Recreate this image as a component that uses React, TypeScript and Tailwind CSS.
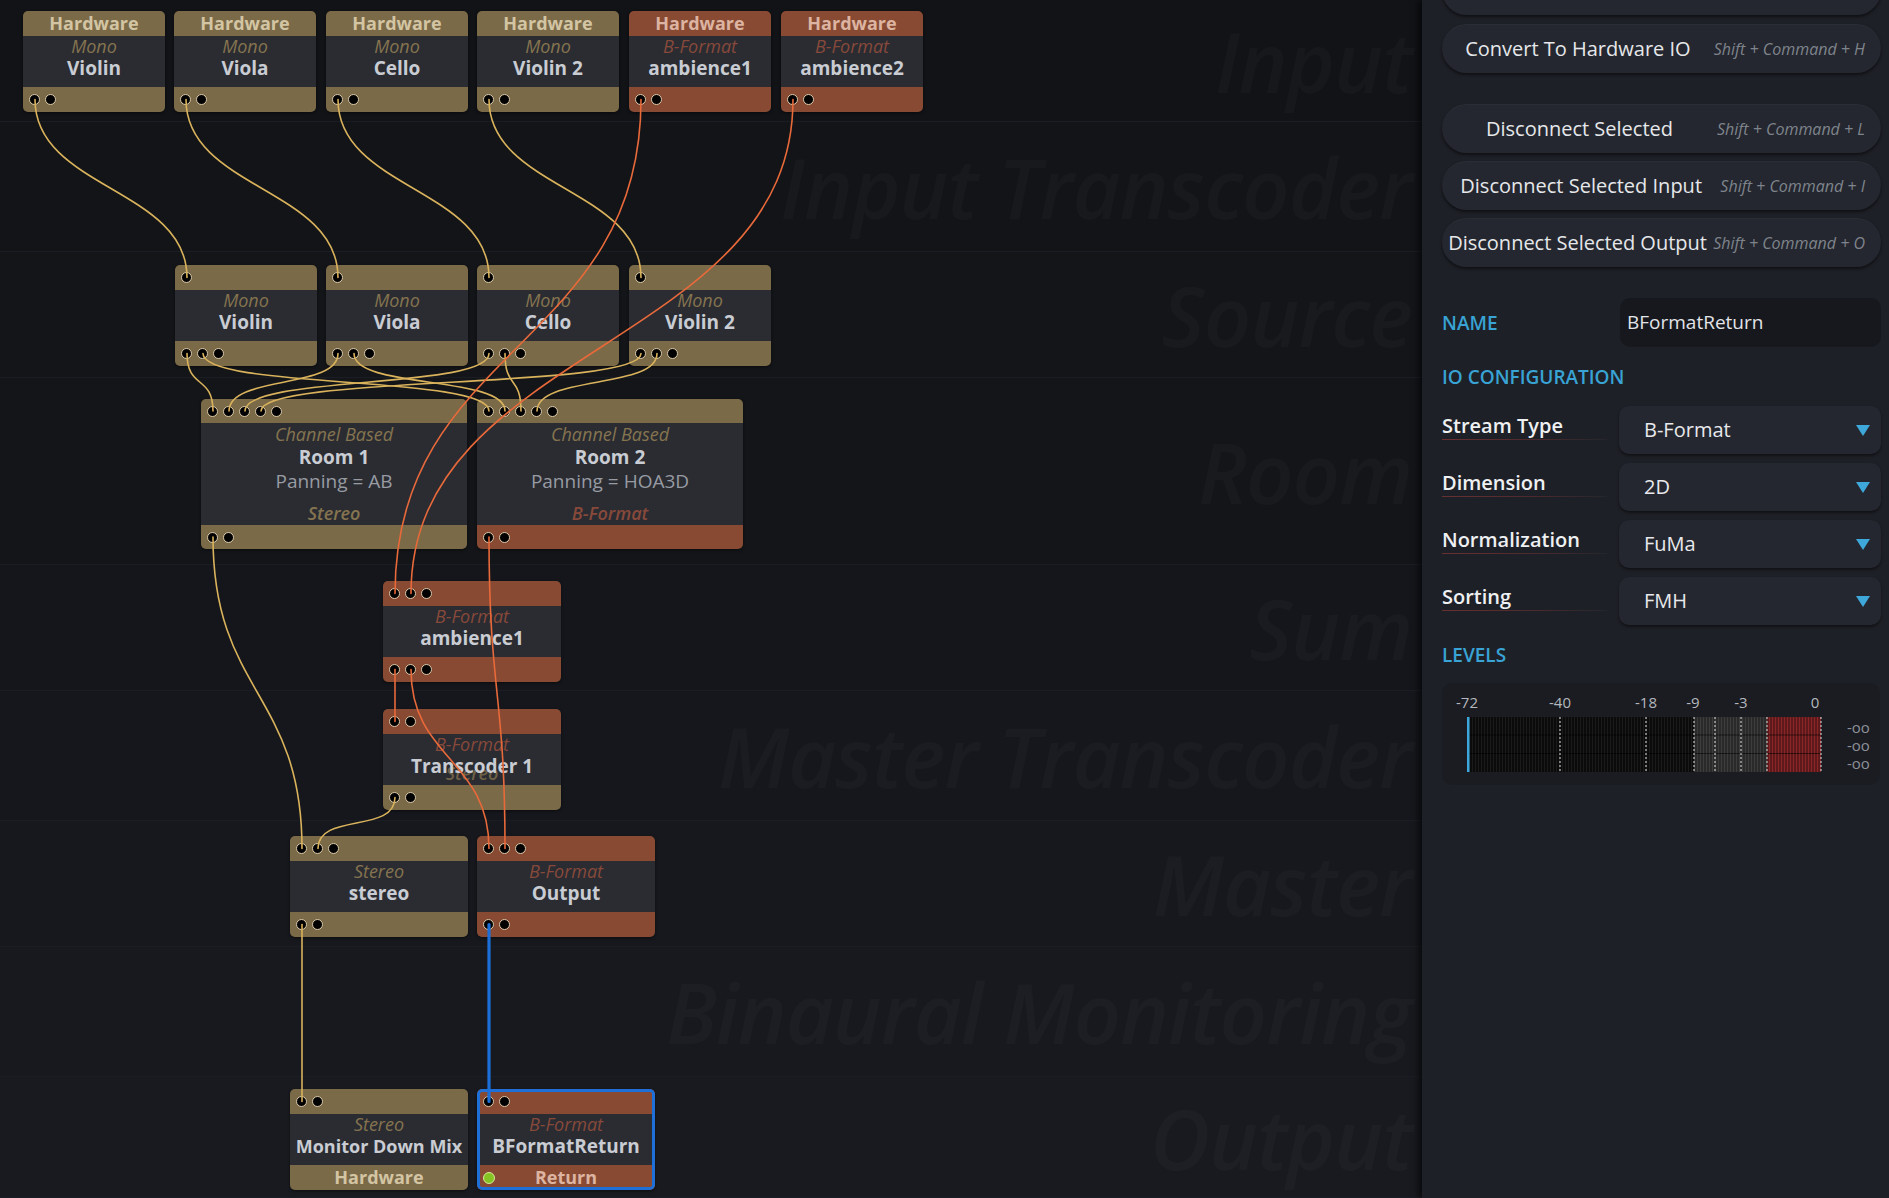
import React from 'react';

type Tone = 'tan' | 'orange';
type Pt = { x: number; y: number };

const barBg: Record<Tone, string> = { tan: 'bg-[#7b6a48]', orange: 'bg-[#884a33]' };
const barText: Record<Tone, string> = { tan: 'text-[#d3c5a3]', orange: 'text-[#dcb4a1]' };
const kindText: Record<Tone, string> = { tan: 'text-[#85744f]', orange: 'text-[#87493a]' };

type NodeDef = {
    id: string;
    x: number;
    y: number;
    w: number;
    top: Tone;
    bottom: Tone;
    ins: number;
    outs: number;
    head?: string;
    foot?: string;
    kind: string;
    kindTone: Tone;
    name: string;
    nameCls?: string;
    room?: { panning: string; format: string; formatTone: Tone };
    ghost?: string;
    selected?: boolean;
    dot?: boolean;
};

const BANDS = [
    { name: 'Input', cls: 'h-[122px] bg-[#111317]' },
    { name: 'Input Transcoder', cls: 'h-[130px] bg-[#121418]' },
    { name: 'Source', cls: 'h-[126px] bg-[#131519]' },
    { name: 'Room', cls: 'h-[187px] bg-[#131519]' },
    { name: 'Sum', cls: 'h-[126px] bg-[#14161b]' },
    { name: 'Master Transcoder', cls: 'h-[130px] bg-[#15171c]' },
    { name: 'Master', cls: 'h-[126px] bg-[#16181d]' },
    { name: 'Binaural Monitoring', cls: 'h-[130px] bg-[#17191e]' },
    { name: 'Output', cls: 'h-[121px] bg-[#181a1f]' },
];

const input = (id: string, x: number, name: string, tone: Tone): NodeDef => ({
    id, x, y: 11, w: 142, top: tone, bottom: tone, ins: 0, outs: 2, head: 'Hardware',
    kind: tone === 'tan' ? 'Mono' : 'B-Format', kindTone: tone, name,
});

const source = (id: string, x: number, name: string): NodeDef => ({
    id, x, y: 265, w: 142, top: 'tan', bottom: 'tan', ins: 1, outs: 3, kind: 'Mono', kindTone: 'tan', name,
});

const NODES: NodeDef[] = [
    input('in-violin', 23, 'Violin', 'tan'),
    input('in-viola', 174, 'Viola', 'tan'),
    input('in-cello', 326, 'Cello', 'tan'),
    input('in-violin2', 477, 'Violin 2', 'tan'),
    input('in-amb1', 629, 'ambience1', 'orange'),
    input('in-amb2', 781, 'ambience2', 'orange'),
    source('src-violin', 175, 'Violin'),
    source('src-viola', 326, 'Viola'),
    source('src-cello', 477, 'Cello'),
    source('src-violin2', 629, 'Violin 2'),
    {
        id: 'room1', x: 201, y: 399, w: 266, top: 'tan', bottom: 'tan', ins: 5, outs: 2,
        kind: 'Channel Based', kindTone: 'tan', name: 'Room 1',
        room: { panning: 'Panning = AB', format: 'Stereo', formatTone: 'tan' },
    },
    {
        id: 'room2', x: 477, y: 399, w: 266, top: 'tan', bottom: 'orange', ins: 5, outs: 2,
        kind: 'Channel Based', kindTone: 'tan', name: 'Room 2',
        room: { panning: 'Panning = HOA3D', format: 'B-Format', formatTone: 'orange' },
    },
    { id: 'sum', x: 383, y: 581, w: 178, top: 'orange', bottom: 'orange', ins: 3, outs: 3, kind: 'B-Format', kindTone: 'orange', name: 'ambience1' },
    { id: 'tc1', x: 383, y: 709, w: 178, top: 'orange', bottom: 'tan', ins: 2, outs: 2, kind: 'B-Format', kindTone: 'orange', name: 'Transcoder 1', ghost: 'Stereo' },
    { id: 'stereo', x: 290, y: 836, w: 178, top: 'tan', bottom: 'tan', ins: 3, outs: 2, kind: 'Stereo', kindTone: 'tan', name: 'stereo' },
    { id: 'output', x: 477, y: 836, w: 178, top: 'orange', bottom: 'orange', ins: 3, outs: 2, kind: 'B-Format', kindTone: 'orange', name: 'Output' },
    { id: 'mon', x: 290, y: 1089, w: 178, top: 'tan', bottom: 'tan', ins: 2, outs: 0, kind: 'Stereo', kindTone: 'tan', name: 'Monitor Down Mix', nameCls: 'text-[18px]', foot: 'Hardware' },
    { id: 'ret', x: 477, y: 1089, w: 178, top: 'orange', bottom: 'orange', ins: 2, outs: 0, kind: 'B-Format', kindTone: 'orange', name: 'BFormatReturn', foot: 'Return', dot: true, selected: true },
];

const WIRE_COLOR = { tan: '#d9b25c', orange: '#e8693a', blue: '#1c6fd8' };

const WIRES: [string, number, string, number, keyof typeof WIRE_COLOR][] = [
    ['in-violin', 0, 'src-violin', 0, 'tan'],
    ['in-viola', 0, 'src-viola', 0, 'tan'],
    ['in-cello', 0, 'src-cello', 0, 'tan'],
    ['in-violin2', 0, 'src-violin2', 0, 'tan'],
    ['src-violin', 0, 'room1', 0, 'tan'],
    ['src-viola', 0, 'room1', 1, 'tan'],
    ['src-cello', 0, 'room1', 2, 'tan'],
    ['src-violin2', 0, 'room1', 3, 'tan'],
    ['src-violin', 1, 'room2', 0, 'tan'],
    ['src-viola', 1, 'room2', 1, 'tan'],
    ['src-cello', 1, 'room2', 2, 'tan'],
    ['src-violin2', 1, 'room2', 3, 'tan'],
    ['room1', 0, 'stereo', 0, 'tan'],
    ['tc1', 0, 'stereo', 1, 'tan'],
    ['stereo', 0, 'mon', 0, 'tan'],
    ['in-amb1', 0, 'sum', 0, 'orange'],
    ['in-amb2', 0, 'sum', 1, 'orange'],
    ['sum', 0, 'tc1', 0, 'orange'],
    ['sum', 1, 'output', 0, 'orange'],
    ['room2', 0, 'output', 1, 'orange'],
    ['output', 0, 'ret', 0, 'blue'],
];

const nodeHeight = (n: NodeDef) => (n.room ? 150 : 101);
const barHeight = (n: NodeDef) => (n.room ? 24 : 25);

function portPos(id: string, side: 'in' | 'out', i: number): Pt {
    const n = NODES.find(d => d.id === id)!;
    const half = barHeight(n) / 2;
    return {
        x: n.x + 12 + i * 16,
        y: side === 'in' ? n.y + half : n.y + nodeHeight(n) - half,
    };
}

function wirePath(a: Pt, b: Pt) {
    const d = Math.max(36, (b.y - a.y) * 0.5);
    return `M${a.x} ${a.y} C${a.x} ${a.y + d} ${b.x} ${b.y - d} ${b.x} ${b.y}`;
}

const Ports: React.FC<{ n: number }> = ({ n }) => (
    <div className="flex gap-[5px] pl-[6px]">
        {Array.from({ length: n }).map((_, i) => (
            <span key={i} className="block h-[11px] w-[11px] rounded-full border-[1.5px] border-[#dccbac] bg-black" />
        ))}
    </div>
);

const GraphNode: React.FC<{ d: NodeDef }> = ({ d }) => {
    const bar = d.room ? 'h-[24px]' : 'h-[25px]';
    return (
        <div
            className="absolute flex flex-col overflow-hidden rounded-[5px] shadow-[0_1px_3px_rgba(0,0,0,0.5)]"
            style={{ left: d.x, top: d.y, width: d.w }}
        >
            {/* header: title or input ports */}
            {d.head ? (
                <div className={`flex ${bar} items-center justify-center ${barBg[d.top]} text-[18px] font-bold ${barText[d.top]}`}>
                    {d.head}
                </div>
            ) : (
                <div className={`flex ${bar} items-center ${barBg[d.top]}`}>
                    <Ports n={d.ins} />
                </div>
            )}

            {d.room ? (
                <div className="flex h-[102px] flex-col items-center bg-[#2a2c32] whitespace-nowrap">
                    <div className={`h-[22px] text-[18px] leading-[22px] italic ${kindText.tan}`}>{d.kind}</div>
                    <div className="h-[24px] text-[19px] leading-[24px] font-bold text-[#c9ccd2]">{d.name}</div>
                    <div className="h-[24px] text-[19px] leading-[24px] text-[#989ba2]">{d.room.panning}</div>
                    <div className={`mt-[8px] h-[24px] text-[18px] leading-[24px] font-semibold italic ${kindText[d.room.formatTone]}`}>
                        {d.room.format}
                    </div>
                </div>
            ) : (
                <div className="relative flex h-[51px] flex-col items-center bg-[#2a2c32] whitespace-nowrap">
                    <div className={`h-[20px] text-[18px] leading-[20px] italic ${kindText[d.kindTone]}`}>{d.kind}</div>
                    {d.ghost && (
                        <div className="absolute top-[27px] h-[24px] text-[18px] leading-[24px] font-semibold italic text-[#6f6146]">
                            {d.ghost}
                        </div>
                    )}
                    <div className={`relative h-[24px] leading-[24px] font-bold text-[#c9ccd2] ${d.nameCls ?? 'text-[19px]'}`}>
                        {d.name}
                    </div>
                </div>
            )}

            {/* footer: output ports or label */}
            <div className={`relative flex ${bar} items-center ${barBg[d.bottom]}`}>
                {d.foot ? (
                    <>
                        {d.dot && (
                            <span className="absolute left-[6px] h-[12px] w-[12px] rounded-full border border-[#d6e59a] bg-[#86c424]" />
                        )}
                        <span className={`flex-1 text-center text-[18px] font-bold ${barText[d.bottom]}`}>{d.foot}</span>
                    </>
                ) : (
                    <Ports n={d.outs} />
                )}
            </div>

            {/* selection frame */}
            {d.selected && (
                <div className="pointer-events-none absolute inset-0 rounded-[5px] border-[3px] border-[#1e6fd8]" />
            )}
        </div>
    );
};

const Canvas: React.FC = () => (
    <div className="relative h-[1198px] w-[1422px] shrink-0 overflow-hidden">
        {/* lanes */}
        <div className="flex flex-col">
            {BANDS.map(b => (
                <div key={b.name} className={`flex items-center justify-end border-b border-[#1a1d23] pr-[10px] ${b.cls}`}>
                    <span className="text-[83px] leading-none font-semibold italic tracking-[-1px] whitespace-nowrap text-white/[0.025]">
                        {b.name}
                    </span>
                </div>
            ))}
        </div>

        {NODES.map(d => (
            <GraphNode key={d.id} d={d} />
        ))}

        {/* connections */}
        <svg className="pointer-events-none absolute inset-0" width={1422} height={1198}>
            {WIRES.map(([from, fi, to, ti, color], i) => (
                <path
                    key={i}
                    d={wirePath(portPos(from, 'out', fi), portPos(to, 'in', ti))}
                    fill="none"
                    stroke={WIRE_COLOR[color]}
                    strokeWidth={color === 'blue' ? 3.2 : 1.6}
                    strokeLinecap="round"
                />
            ))}
        </svg>
    </div>
);

const ActionButton: React.FC<{ label?: string; keys?: string; className?: string }> = ({ label, keys, className }) => (
    <div className={`flex h-[49px] items-center rounded-full bg-[#24272f] shadow-[0_2px_3px_rgba(0,0,0,0.5),inset_0_1px_0_rgba(255,255,255,0.03)] ${className ?? ''}`}>
        <span className="min-w-0 flex-1 text-center text-[20px] whitespace-nowrap text-[#e6e7ea]">{label}</span>
        {keys && <span className="pr-4 text-[16px] whitespace-nowrap italic text-[#7f848c]">{keys}</span>}
    </div>
);

const Heading: React.FC<{ children: React.ReactNode; className?: string }> = ({ children, className }) => (
    <div className={`h-[24px] text-[19px] leading-[24px] font-semibold text-[#38a3d4] ${className ?? ''}`}>{children}</div>
);

const SelectRow: React.FC<{ label: string; value: string; className?: string }> = ({ label, value, className }) => (
    <div className={`flex items-center ${className ?? ''}`}>
        <div className="w-[177px] pb-[8px]">
            <div className="text-[20px] leading-[26px] font-semibold text-[#eef0f2]">{label}</div>
            <div className="h-px w-[165px] bg-[linear-gradient(90deg,#6a3032,#4d2a2d_55%,#24262c)]" />
        </div>
        <div className="flex h-[48px] w-[262px] items-center rounded-[10px] bg-[#24272f] pr-[11px] pl-[25px] shadow-[0_2px_3px_rgba(0,0,0,0.45)]">
            <span className="flex-1 text-[20px] text-[#e8e9ec]">{value}</span>
            <svg width="14" height="11" viewBox="0 0 14 11">
                <path d="M0 0H14L7 11Z" fill="#3ea8da" />
            </svg>
        </div>
    </div>
);

const TICKS = [
    { t: '-72', x: 25 },
    { t: '-40', x: 118 },
    { t: '-18', x: 204 },
    { t: '-9', x: 251 },
    { t: '-3', x: 299 },
    { t: '0', x: 373 },
];

const Meter: React.FC = () => (
    <div className="mt-[16px] h-[102px] w-[438px] overflow-hidden rounded-[10px] bg-[#1a1c22]">
        <svg width="438" height="102" viewBox="0 0 438 102">
            <defs>
                <pattern id="dark" width="3" height="4" patternUnits="userSpaceOnUse">
                    <rect width="3" height="4" fill="#0b0b0b" />
                    <rect width="1" height="4" fill="#1b1b1b" />
                </pattern>
                <pattern id="grey" width="3" height="4" patternUnits="userSpaceOnUse">
                    <rect width="3" height="4" fill="#2a2a2a" />
                    <rect width="1" height="4" fill="#3d3d3d" />
                </pattern>
                <pattern id="red" width="3" height="4" patternUnits="userSpaceOnUse">
                    <rect width="3" height="4" fill="#5e1a1b" />
                    <rect width="1" height="4" fill="#8a2628" />
                </pattern>
            </defs>
            {TICKS.map(k => (
                <text key={k.t} x={k.x} y={25} fontSize="15" fill="#b4b7bd" textAnchor="middle" fontFamily="Open Sans, sans-serif">
                    {k.t}
                </text>
            ))}
            <rect x="26" y="34" width="226" height="55" fill="url(#dark)" />
            <rect x="252" y="34" width="73" height="55" fill="url(#grey)" />
            <rect x="325" y="34" width="54" height="55" fill="url(#red)" />
            <line x1="26" x2="379" y1="52" y2="52" stroke="rgba(0,0,0,0.55)" />
            <line x1="26" x2="379" y1="70.5" y2="70.5" stroke="rgba(0,0,0,0.55)" />
            {[118, 204, 252, 273, 299, 325, 379].map(x => (
                <line key={x} x1={x} x2={x} y1="34" y2="89" stroke="#c4c4c4" strokeWidth="1.2" strokeDasharray="2 2" />
            ))}
            <rect x="25" y="34" width="2.5" height="55" fill="#3ba7da" />
            {[50, 68, 86].map(y => (
                <text key={y} x="405" y={y} fontSize="15" fill="#8d9198" fontFamily="Open Sans, sans-serif">
                    -oo
                </text>
            ))}
        </svg>
    </div>
);

const Sidebar: React.FC = () => (
    <aside className="relative h-[1198px] w-[467px] shrink-0 overflow-hidden bg-[#1e2027] pr-[8px] pl-[20px] shadow-[-4px_0_6px_rgba(0,0,0,0.55)]">
        <ActionButton className="mt-[-34px]" />
        <ActionButton className="mt-[9px]" label="Convert To Hardware IO" keys="Shift + Command + H" />
        <ActionButton className="mt-[31px]" label="Disconnect Selected" keys="Shift + Command + L" />
        <ActionButton className="mt-[8px]" label="Disconnect Selected Input" keys="Shift + Command + I" />
        <ActionButton className="mt-[8px]" label="Disconnect Selected Output" keys="Shift + Command + O" />

        <div className="mt-[31px] flex items-center">
            <Heading className="w-[178px]">NAME</Heading>
            <div className="flex h-[49px] w-[261px] items-center rounded-[10px] bg-[#16181d] pl-[7px] text-[19px] text-[#e2e4e8]">
                BFormatReturn
            </div>
        </div>

        <Heading className="mt-[18px]">IO CONFIGURATION</Heading>
        <SelectRow className="mt-[17px]" label="Stream Type" value="B-Format" />
        <SelectRow className="mt-[9px]" label="Dimension" value="2D" />
        <SelectRow className="mt-[9px]" label="Normalization" value="FuMa" />
        <SelectRow className="mt-[9px]" label="Sorting" value="FMH" />

        <Heading className="mt-[18px]">LEVELS</Heading>
        <Meter />
    </aside>
);

export default function App() {
    return (
        <div className="flex h-[1198px] w-[1889px] overflow-hidden bg-[#131519] font-['Open_Sans',sans-serif]">
            <Canvas />
            <Sidebar />
        </div>
    );
}
